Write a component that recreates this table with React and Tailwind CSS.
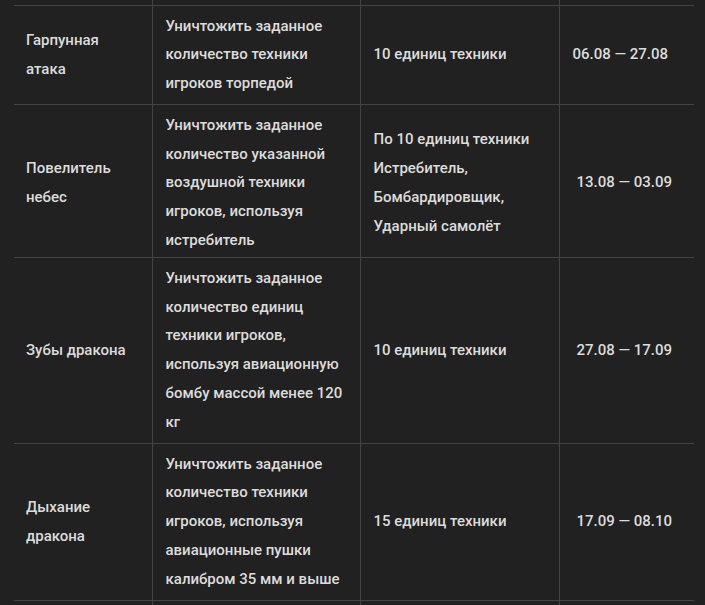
const rows = [
  {
    name: 'Гарпунная атака',
    task: 'Уничтожить заданное количество техники игроков торпедой',
    goal: ['10 единиц техники'],
    dates: '06.08 — 27.08',
    pad: 'py-[6px]',
    datePad: 'pl-[13px]',
  },
  {
    name: 'Повелитель небес',
    task: 'Уничтожить заданное количество указанной воздушной техники игроков, используя истребитель',
    goal: ['По 10 единиц техники', 'Истребитель,', 'Бомбардировщик,', 'Ударный самолёт'],
    dates: '13.08 — 03.09',
    pad: 'pt-[6px] pb-[2px]',
    datePad: 'pl-[17px]',
  },
  {
    name: 'Зубы дракона',
    task: 'Уничтожить заданное количество единиц техники игроков, используя авиационную бомбу массой менее 120 кг',
    goal: ['10 единиц техники'],
    dates: '27.08 — 17.09',
    pad: 'py-[6px]',
    datePad: 'pl-[17px]',
  },
  {
    name: 'Дыхание дракона',
    task: 'Уничтожить заданное количество техники игроков, используя авиационные пушки калибром 35 мм и выше',
    goal: ['15 единиц техники'],
    dates: '17.09 — 08.10',
    pad: 'py-[6px]',
    datePad: 'pl-[17px]',
  },
];

export default function App() {
  return (
    <div className="w-[705px] h-[605px] overflow-hidden bg-[#212121] font-['Roboto',sans-serif] font-medium text-[15px] leading-[28.8px] text-[#dcdcdc]">
      <div className="px-[14px] -mt-[20px]">
        <table className="w-[680px] table-fixed border-collapse">
          <colgroup>
            <col className="w-[138px]" />
            <col className="w-[208px]" />
            <col className="w-[199px]" />
            <col className="w-[135px]" />
          </colgroup>
          <tbody>
            <tr className="h-[25px]">
              <td />
              <td className="border-l border-[#434343]" />
              <td className="border-l border-[#434343]" />
              <td className="border-l border-[#434343]" />
            </tr>
            {rows.map((r) => (
              <tr key={r.name} className="border-t border-[#434343]">
                <td className={`px-3 align-middle ${r.pad}`}>{r.name}</td>
                <td className={`border-l border-[#434343] pl-[13px] pr-2 align-middle ${r.pad}`}>{r.task}</td>
                <td className={`border-l border-[#434343] pl-[13px] pr-2 align-middle ${r.pad}`}>
                  {r.goal.map((g) => (
                    <div key={g}>{g}</div>
                  ))}
                </td>
                <td className={`border-l border-[#434343] pr-2 align-middle ${r.pad} ${r.datePad}`}>{r.dates}</td>
              </tr>
            ))}
            <tr className="h-[40px] border-t border-[#434343]">
              <td />
              <td className="border-l border-[#434343]" />
              <td className="border-l border-[#434343]" />
              <td className="border-l border-[#434343]" />
            </tr>
          </tbody>
        </table>
      </div>
    </div>
  );
}
